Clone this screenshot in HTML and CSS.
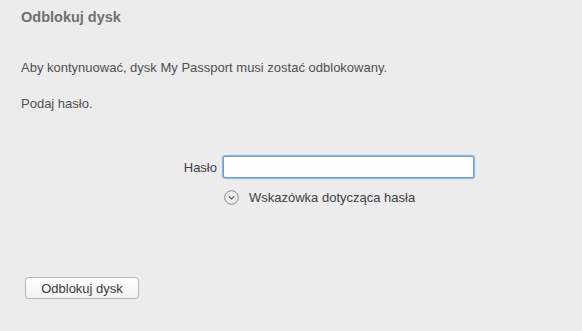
FILE: index.html
```html
<!DOCTYPE html>
<html lang="pl">
<head>
    <meta charset="UTF-8">
    <meta name="viewport" content="width=device-width, initial-scale=1.0">
    <title>Odblokuj dysk</title>
    <link rel="stylesheet" href="styles.css">
</head>
<body>

    <!-- Unlock dialog -->
    <div class="dialog">
        <h1>Odblokuj dysk</h1>

        <p class="intro">Aby kontynuować, dysk My Passport musi zostać odblokowany.</p>
        <p class="prompt">Podaj hasło.</p>

        <!-- Password field -->
        <div class="field">
            <label for="password">Hasło</label>
            <input type="password" id="password" name="password">

            <div class="hint">
                <span class="hint-icon">
                    <svg width="15" height="15" viewBox="0 0 15 15">
                        <circle cx="7.5" cy="7.5" r="6.8" fill="none" stroke="#8a8a8a" stroke-width="1"/>
                        <path d="M4.8 6.3 L7.5 9 L10.2 6.3" fill="none" stroke="#555" stroke-width="1.2"/>
                    </svg>
                </span>
                <span>Wskazówka dotycząca hasła</span>
            </div>
        </div>

        <button type="button" class="unlock">Odblokuj dysk</button>
    </div>

</body>
</html>
```

FILE: styles.css
```css
/* General page */
html, body {
    margin: 0;
    padding: 0;
    background-color: #ececec;
    font-family: "Liberation Sans", Arial, sans-serif;
    font-size: 13px;
    color: #505050;
}

/* Dialog container */
.dialog {
    padding: 0 21px;
    display: flex;
    flex-direction: column;
    align-items: flex-start;
}

/* Title */
.dialog h1 {
    margin: 9px 0 0;
    font-size: 14.5px;
    line-height: 17px;
    font-weight: bold;
    color: #707070;
}

/* Body text */
.dialog p {
    margin: 0;
    line-height: 15px;
}

.intro {
    margin-top: 34px !important;
}

.prompt {
    margin-top: 21px !important;
}

/* Password row */
.field {
    display: grid;
    grid-template-columns: 196px 251px;
    column-gap: 6px;
    row-gap: 11px;
    margin-top: 45px;
    align-items: center;
}

.field label {
    justify-self: end;
    color: #3f3f3f;
}

.field input {
    box-sizing: border-box;
    width: 251px;
    height: 22px;
    margin: 0;
    padding: 2px 4px;
    background: #fff;
    border: 1px solid #6a9fd6;
    border-radius: 2px;
    box-shadow: 0 0 1px 1px #86b6e6;
    outline: none;
    font-family: inherit;
    font-size: 13px;
}

/* Hint link */
.hint {
    grid-column: 2;
    display: flex;
    align-items: center;
    gap: 10px;
    height: 16px;
    padding-left: 1px;
    color: #3f3f3f;
}

.hint-icon {
    display: flex;
}

/* Unlock button */
.unlock {
    margin: 72px 0 0 4px;
    width: 114px;
    height: 22px;
    padding: 0;
    font-family: inherit;
    font-size: 13px;
    color: #3a3a3a;
    background: linear-gradient(#ffffff, #f1f1f1);
    border: 1px solid #b4b4b4;
    border-radius: 4px;
    box-shadow: 0 1px 0 rgba(0, 0, 0, 0.05);
}
```
